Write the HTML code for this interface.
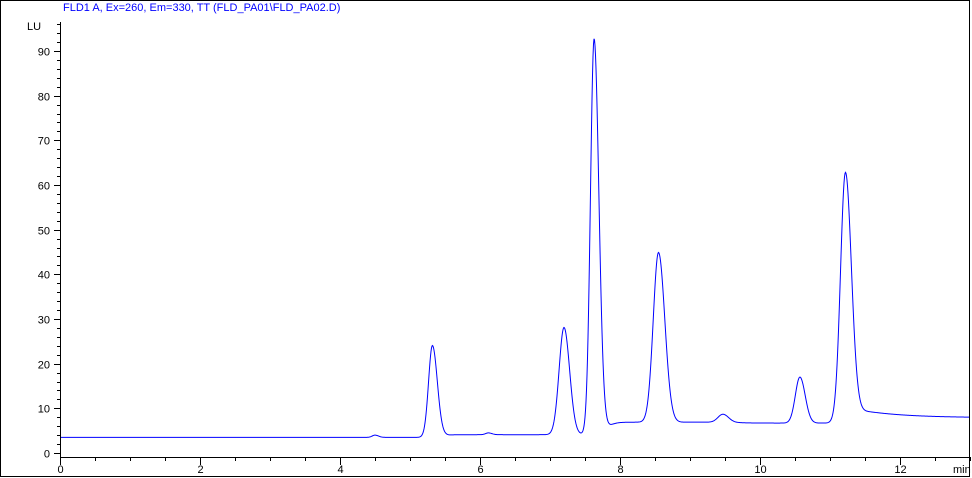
<!DOCTYPE html>
<html><head><meta charset="utf-8"><style>
html,body{margin:0;padding:0;background:#fff;}
svg{display:block;}
text{font-family:"Liberation Sans",sans-serif;font-size:11px;}
</style></head><body>
<svg id="s" width="972" height="478" xmlns="http://www.w3.org/2000/svg">
<rect x="0.5" y="0.5" width="969" height="476" fill="#fff" stroke="#000"/>
<text x="63" y="11" fill="#0000ff" font-size="10.5">FLD1 A, Ex=260, Em=330, TT (FLD_PA01\FLD_PA02.D)</text>
<text x="27" y="30" fill="#000">LU</text>
<g id="ax" stroke="#000" stroke-width="1" shape-rendering="crispEdges"></g>
<g id="lb" fill="#000"></g>
<path id="tr" fill="none" stroke="#0000ff" stroke-width="1"/>
</svg>
<script>
var X0=60,PX=70,Y0=453,PY=4.467;
var ax=document.getElementById('ax'),lb=document.getElementById('lb');
function L(x1,y1,x2,y2){var l=document.createElementNS('http://www.w3.org/2000/svg','line');l.setAttribute('x1',x1);l.setAttribute('y1',y1);l.setAttribute('x2',x2);l.setAttribute('y2',y2);ax.appendChild(l);}
function T(x,y,s,a){var t=document.createElementNS('http://www.w3.org/2000/svg','text');t.setAttribute('x',x);t.setAttribute('y',y);t.setAttribute('text-anchor',a);t.textContent=s;lb.appendChild(t);}
L(60.5,22,60.5,457);L(60,457.5,969,457.5);
for(var v=0;v<=96;v+=2){var y=Math.round(Y0-v*PY)+0.5;L(v%10==0?54:57,y,60,y);if(v%10==0)T(50,y+4,v,'end');}
for(var m=0;m<=13;m+=0.5){var x=Math.round(X0+m*PX)+0.5;L(x,457,x,m%2==0?465:461);if(m%2==0)T(x,473,m,'middle');}
T(953,473,'min','start');
function sg(z){return 1/(1+Math.exp(-z));}
var P=[[4.5,0.5,0.04,0.05],[5.32,20.5,0.055,0.07],[6.12,0.4,0.04,0.05],[7.2,24,0.07,0.08],[7.63,88.5,0.052,0.068],[8.55,38,0.075,0.09],[9.47,1.8,0.07,0.08],[10.57,10.3,0.065,0.075],[11.22,55.5,0.07,0.085]];
function f(t){var b=3.5+0.6*sg((t-5.45)/0.06)+2.8*sg((t-7.8)/0.06)+1.8*sg((t-11.3)/0.06)*Math.exp(-Math.max(0,t-11.4)/0.6)+1.2*sg((t-11.3)/0.06)-0.2*sg((t-9.7)/0.1);
for(var i=0;i<P.length;i++){var p=P[i],d=t-p[0],s=d<0?p[2]:p[3];b+=p[1]*Math.exp(-d*d/(2*s*s));}return b;}
var d='';for(var x=61;x<=969;x+=0.5){var t=(x-X0)/PX;d+=(d?'L':'M')+x+' '+(Y0-f(t)*PY).toFixed(2);}
document.getElementById('tr').setAttribute('d',d);
</script>
</body></html>
